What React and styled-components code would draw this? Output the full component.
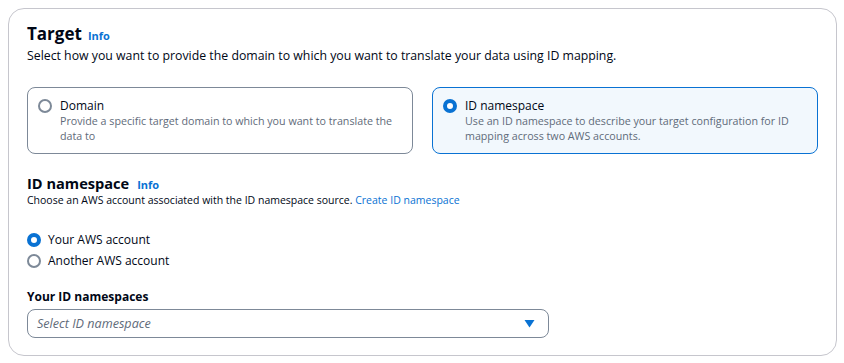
import React from 'react'
import styled, { createGlobalStyle } from 'styled-components'

const GlobalStyle = createGlobalStyle`
  body {
    margin: 0;
    background: #ffffff;
    font-family: "Open Sans", "Noto Sans", sans-serif;
    color: #000716;
  }
`

const Page = styled.div`
  padding: 8px 7px 7px 8px;
`

const Container = styled.section`
  border: 1px solid #c6c6cd;
  border-radius: 16px;
  padding: 14px 18px 17px 18px;
  display: flex;
  flex-direction: column;
`

const HeadingRow = styled.div`
  display: flex;
  align-items: baseline;
  gap: ${(p) => (p.small ? '8px' : '6px')};
`

const Title = styled.h2`
  margin: 0;
  font-size: ${(p) => (p.small ? '14.6px' : '17px')};
  font-weight: 700;
  line-height: ${(p) => (p.small ? '20px' : '22px')};
  color: #000716;
`

const InfoLink = styled.a`
  font-size: 11px;
  font-weight: 700;
  color: #0972d3;
  text-decoration: none;
`

const Description = styled.p`
  margin: ${(p) => (p.small ? '0' : '2px 0 0')};
  font-size: ${(p) => (p.small ? '10.5px' : '12.3px')};
  line-height: ${(p) => (p.small ? '14px' : '18px')};
  color: #000716;
`

const Link = styled.a`
  color: #0972d3;
  text-decoration: none;
`

const Tiles = styled.div`
  display: grid;
  grid-template-columns: 1fr 1fr;
  gap: 19px;
  margin-top: 22px;
`

const Tile = styled.label`
  display: flex;
  gap: 8px;
  padding: 10px 10px 8px 10px;
  height: 67px;
  box-sizing: border-box;
  border-radius: 8px;
  border: 1px solid ${(p) => (p.selected ? '#0972d3' : '#7d8998')};
  background: ${(p) => (p.selected ? '#f2f8fd' : '#ffffff')};
`

const Radio = styled.span`
  flex: none;
  width: 14px;
  height: 14px;
  margin-top: 1px;
  border-radius: 50%;
  box-sizing: border-box;
  border: ${(p) => (p.checked ? '4px solid #0972d3' : '2px solid #7d8998')};
  background: #ffffff;
`

const TileText = styled.div`
  display: flex;
  flex-direction: column;
`

const TileLabel = styled.span`
  font-size: 12px;
  line-height: 16px;
  color: #000716;
`

const TileHint = styled.span`
  font-size: 10.7px;
  line-height: 15px;
  color: #5f6b7a;
`

const Section = styled.div`
  margin-top: 19px;
`

const RadioGroup = styled.div`
  display: flex;
  flex-direction: column;
  gap: 4px;
  margin-top: 24px;
`

const RadioRow = styled.label`
  display: flex;
  align-items: center;
  gap: 7px;
  font-size: 12px;
  line-height: 17px;
`

const FieldLabel = styled.div`
  margin-top: 20px;
  font-size: 12px;
  font-weight: 700;
  line-height: 16px;
`

const Select = styled.div`
  width: 522px;
  height: 29px;
  box-sizing: border-box;
  margin-top: 4px;
  border: 1px solid #7d8998;
  border-radius: 8px;
  display: flex;
  align-items: center;
  justify-content: space-between;
  padding: 0 13px 0 9px;
`

const Placeholder = styled.span`
  font-size: 12.6px;
  font-style: italic;
  color: #5f6b7a;
`

const Caret = () => (
  <svg width="11" height="9" viewBox="0 0 11 9">
    <path d="M0.5 1h10L5.5 8.5z" fill="#0972d3" />
  </svg>
)

const App = () => (
  <Page>
    <GlobalStyle />
    <Container>
      <HeadingRow>
        <Title>Target</Title>
        <InfoLink href="#">Info</InfoLink>
      </HeadingRow>
      <Description>
        Select how you want to provide the domain to which you want to translate your data using ID mapping.
      </Description>
      <Tiles>
        <Tile>
          <Radio />
          <TileText>
            <TileLabel>Domain</TileLabel>
            <TileHint>Provide a specific target domain to which you want to translate the data to</TileHint>
          </TileText>
        </Tile>
        <Tile selected>
          <Radio checked />
          <TileText>
            <TileLabel>ID namespace</TileLabel>
            <TileHint>Use an ID namespace to describe your target configuration for ID mapping across two AWS accounts.</TileHint>
          </TileText>
        </Tile>
      </Tiles>
      <Section>
        <HeadingRow small>
          <Title small>ID namespace</Title>
          <InfoLink href="#">Info</InfoLink>
        </HeadingRow>
        <Description small>
          Choose an AWS account associated with the ID namespace source. <Link href="#">Create ID namespace</Link>
        </Description>
      </Section>
      <RadioGroup>
        <RadioRow>
          <Radio checked />
          Your AWS account
        </RadioRow>
        <RadioRow>
          <Radio />
          Another AWS account
        </RadioRow>
      </RadioGroup>
      <FieldLabel>Your ID namespaces</FieldLabel>
      <Select>
        <Placeholder>Select ID namespace</Placeholder>
        <Caret />
      </Select>
    </Container>
  </Page>
)

export default App
